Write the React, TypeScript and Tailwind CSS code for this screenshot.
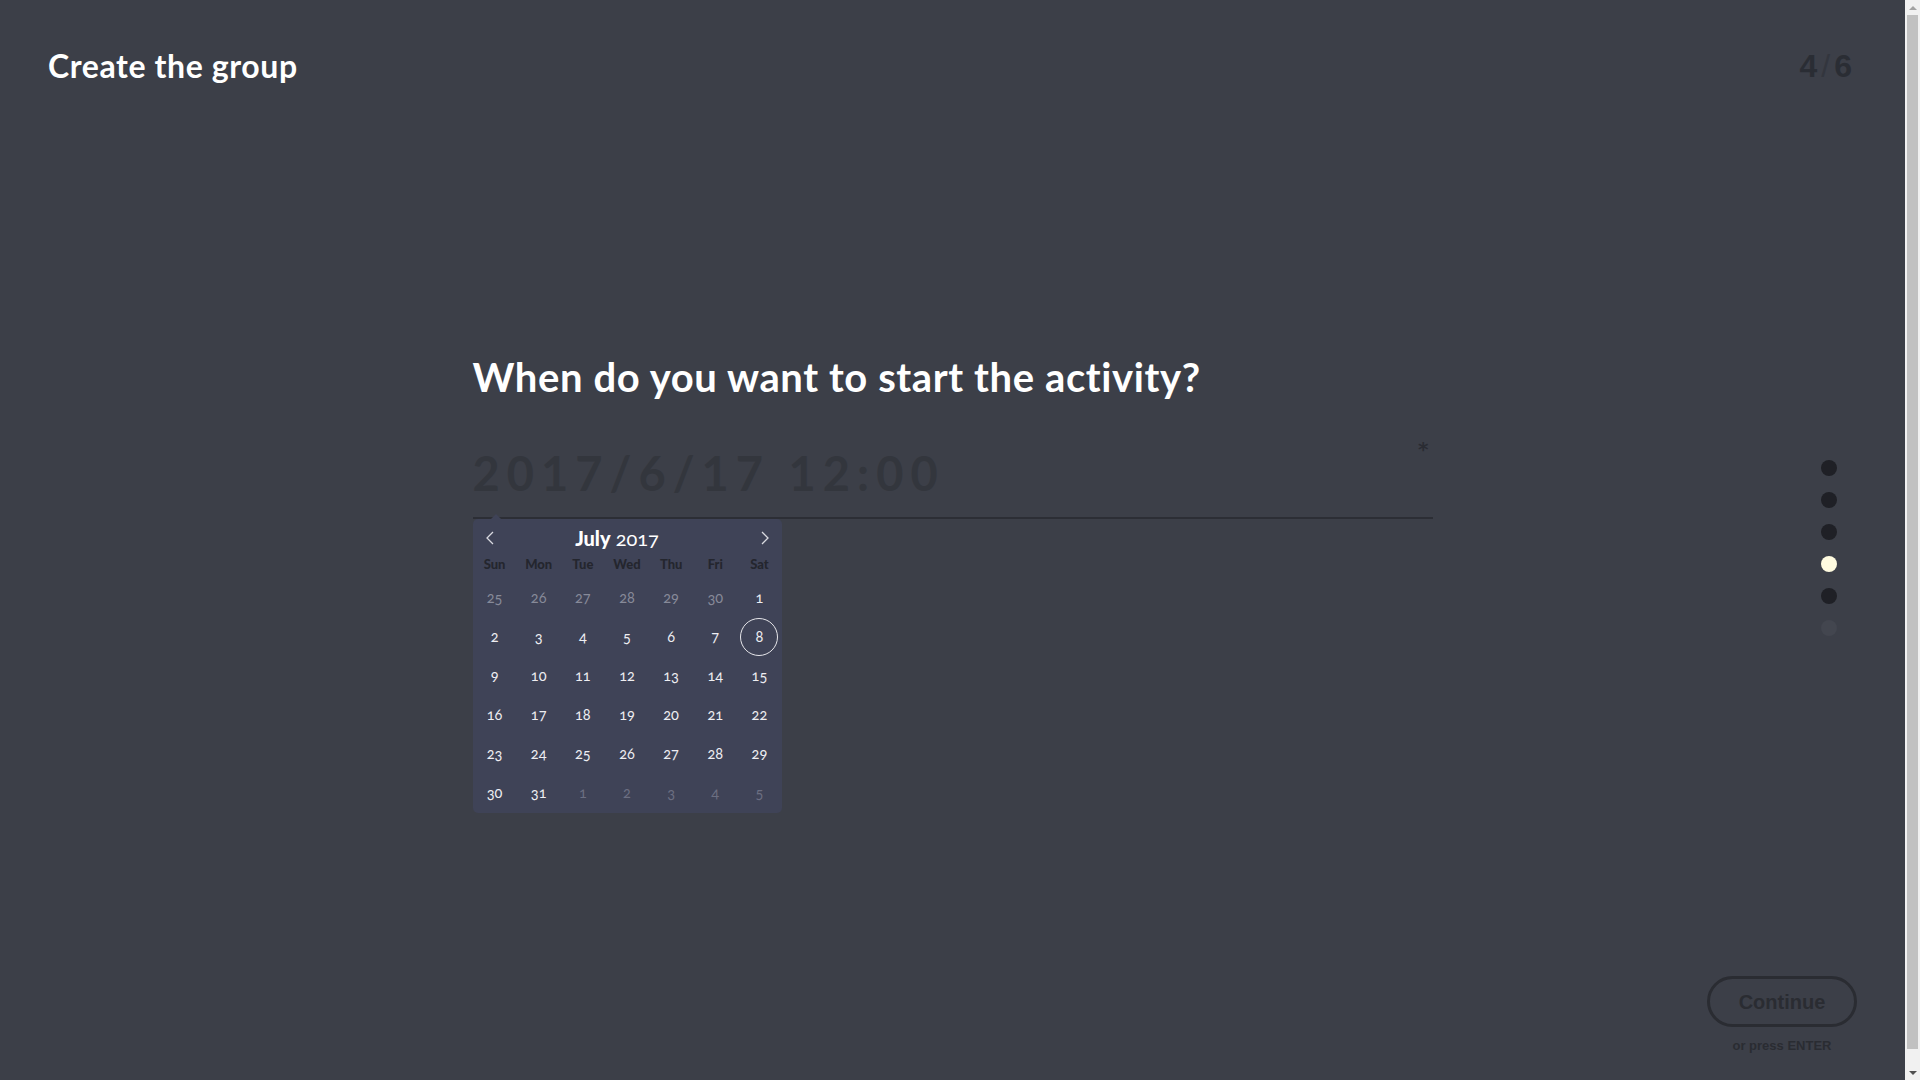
import React from "react";

const heading = { fontFamily: "Lato, 'Open Sans', sans-serif" };
const arial = { fontFamily: "'Liberation Sans', Arial, sans-serif" };

const weekDays = ["Sun", "Mon", "Tue", "Wed", "Thu", "Fri", "Sat"];

type Day = { n: number; kind: "prev" | "cur" | "next"; today?: boolean };

const days: Day[] = [
  ...[25, 26, 27, 28, 29, 30].map((n) => ({ n, kind: "prev" as const })),
  ...Array.from({ length: 31 }, (_, i) => ({ n: i + 1, kind: "cur" as const, today: i + 1 === 8 })),
  ...[1, 2, 3, 4, 5].map((n) => ({ n, kind: "next" as const })),
];

function Calendar() {
  return (
    <div className="relative mt-[0px] w-[309px] rounded-[5px] bg-[#3f4357] pb-[1px]" style={heading}>
      <div className="absolute -top-[5px] left-[18px] h-0 w-0 border-x-[5px] border-b-[5px] border-x-transparent border-b-[#3f4357]" />
      <div className="flex h-[36px] items-center justify-between px-[12px] pt-[2px]">
        <svg width="10" height="16" viewBox="0 0 10 16" fill="none">
          <path d="M8 2 L2 8 L8 14" stroke="#d9dae0" strokeWidth="1.3" />
        </svg>
        <div className="mr-[20px] text-[20px] text-white oldstyle-nums">
          <span className="font-black">July</span> <span className="font-normal">2017</span>
        </div>
        <svg width="10" height="16" viewBox="0 0 10 16" fill="none">
          <path d="M2 2 L8 8 L2 14" stroke="#d9dae0" strokeWidth="1.3" />
        </svg>
      </div>
      <div className="grid h-[16px] grid-cols-7 items-center">
        {weekDays.map((d) => (
          <div key={d} className="text-center text-[13px] font-black text-[#24262e]">
            {d}
          </div>
        ))}
      </div>
      <div className="mt-[7px] grid grid-cols-7">
        {days.map((d, i) => (
          <div key={i} className="flex h-[39px] items-center justify-center">
            <div
              className={
                "flex h-[38px] w-[38px] items-center justify-center rounded-full text-[14.5px] oldstyle-nums " +
                (d.today ? "border border-[#e6e6ea] " : "") +
                (d.kind === "cur" ? "text-[#eeeef2]" : d.kind === "prev" ? "text-[#878a99]" : "text-[#6c6f82]")
              }
            >
              {d.n}
            </div>
          </div>
        ))}
      </div>
    </div>
  );
}

function Scrollbar() {
  return (
    <div className="flex h-[1080px] w-[15px] shrink-0 flex-col items-center bg-[#f1f1f1]">
      <div className="flex h-[15px] items-center justify-center">
        <div className="h-0 w-0 border-x-[4px] border-b-[4px] border-x-transparent border-b-[#a3a3a3]" />
      </div>
      <div className="h-[1034px] w-[11px] bg-[#c1c1c1]" />
      <div className="flex-1" />
      <div className="flex h-[15px] items-center justify-center">
        <div className="h-0 w-0 border-x-[4px] border-t-[4px] border-x-transparent border-t-[#505050]" />
      </div>
    </div>
  );
}

export default function App() {
  return (
    <div className="flex h-[1080px] w-full overflow-hidden bg-[#3c3f48]">
      <div className="relative h-full flex-1">
        <header className="flex items-start justify-between pl-[48px] pr-[53px] pt-[44px]">
          <h1 className="text-[32px] font-bold leading-[44px] tracking-[0.6px] text-white" style={heading}>
            Create the group
          </h1>
          <div className="text-[32px] font-bold leading-[44px] text-[#2a2d34]" style={arial}>
            4<span className="mx-[4px] font-normal text-[#33363e]">/</span>6
          </div>
        </header>

        <main className="mx-auto mt-[265px] w-[960px]">
          <h2 className="text-[40px] font-bold leading-[48px] tracking-[0.6px] text-white" style={heading}>
            When do you want to start the activity?
          </h2>
          <div className="relative mt-[42px] border-b-2 border-[#2c2e35]">
            <div className="pb-[14px] text-[47px] font-bold leading-[60px] tracking-[7px] text-[#33363d]" style={heading}>
              2017/6/17 12:00
            </div>
            <span
              className="absolute right-[4px] top-[-9px] text-[20px] font-bold text-[#2a2c33]"
              style={{ fontFamily: "'DejaVu Sans', sans-serif" }}
            >
              *
            </span>
          </div>
          <Calendar />
        </main>

        <nav className="absolute right-[68px] top-[460px] flex flex-col gap-[16px]">
          <span className="h-[16px] w-[16px] rounded-full bg-[#1f2026]" />
          <span className="h-[16px] w-[16px] rounded-full bg-[#1f2026]" />
          <span className="h-[16px] w-[16px] rounded-full bg-[#1f2026]" />
          <span className="h-[16px] w-[16px] rounded-full bg-[#fffbe0]" />
          <span className="h-[16px] w-[16px] rounded-full bg-[#1f2026]" />
          <span className="h-[16px] w-[16px] rounded-full bg-[#43464f]" />
        </nav>

        <div className="absolute left-[1707px] top-[976px] flex w-[150px] flex-col items-center" style={arial}>
          <button className="flex h-[51px] w-[150px] items-center justify-center rounded-full border-[3px] border-[#2a2c32] text-[20px] font-bold text-[#2a2c32]">
            Continue
          </button>
          <div className="mt-[9px] text-[13px] font-bold text-[#2a2c32]">or press ENTER</div>
        </div>
      </div>
      <Scrollbar />
    </div>
  );
}
